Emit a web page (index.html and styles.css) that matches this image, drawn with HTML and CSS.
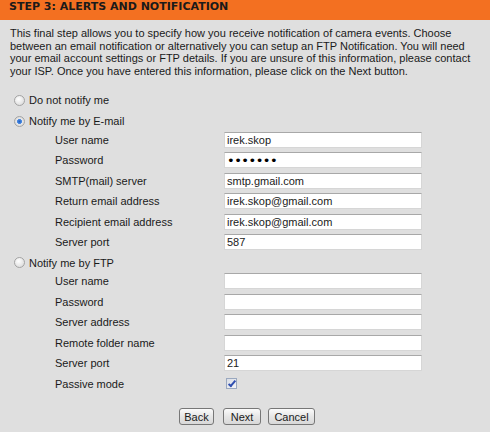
FILE: index.html
```html
<!DOCTYPE html>
<html>
<head>
<link rel="stylesheet" href="styles.css">
</head>
<body>

<div class="step-head">STEP 3: ALERTS AND NOTIFICATION</div>

<p class="intro">This final step allows you to specify how you receive notification of camera events. Choose between an email notification or alternatively you can setup an FTP Notification. You will need your email account settings or FTP details. If you are unsure of this information, please contact your ISP. Once you have entered this information, please click on the Next button.</p>

<form action="javascript:void(0)" class="alerts">
<label class="option first"><input type="radio" name="notify" value="none"> Do not notify me</label>
<label class="option"><input type="radio" name="notify" value="email" checked> Notify me by E-mail</label>
<div class="fields">
	<span>User name</span><input type="text" id="mailUser" value="irek.skop">
	<span>Password</span><input type="password" id="mailPass" value="1234567">
	<span>SMTP(mail) server</span><input type="text" id="smtp" value="smtp.gmail.com">
	<span>Return email address</span><input type="text" id="returnAddr" value="irek.skop@gmail.com">
	<span>Recipient email address</span><input type="text" id="recipient" value="irek.skop@gmail.com">
	<span>Server port</span><input type="text" id="mailPort" value="587">
</div>
<label class="option"><input type="radio" name="notify" value="ftp"> Notify me by FTP</label>
<div class="fields">
	<span>User name</span><input type="text" id="ftpUser">
	<span>Password</span><input type="password" id="ftpPass">
	<span>Server address</span><input type="text" id="ftpHost">
	<span>Remote folder name</span><input type="text" id="ftpFolder">
	<span>Server port</span><input type="text" id="ftpPort" value="21">
	<span>Passive mode</span><div class="check-cell"><input type="checkbox" id="passive" checked></div>
</div>
<div class="buttons">
	<input type="button" class="back" value="Back">
	<input type="submit" class="next" value="Next">
	<input type="button" class="cancel" value="Cancel">
</div>
</form>

</body>
</html>
```

FILE: styles.css
```css
body {
	margin:0;
	width:490px;
	height:432px;
	background-color:#dfdfdf;
	font:11px "Liberation Sans", Arial, sans-serif;
	color:#1a1a1a;
}
.step-head {
	height:20px;
	line-height:21px;
	padding-left:9px;
	background-color:#f37021;
	font:bold 11px "DejaVu Sans", Verdana, sans-serif;
	color:#1a1a1a;
}
p.intro {
	margin:7px 0 0 0;
	padding:0 10px;
	line-height:12.5px;
}
form.alerts {
	margin-top:13px;
}
.option {
	display:flex;
	align-items:center;
	height:20.5px;
	padding-left:14px;
}
.option.first {
	margin-bottom:0.5px;
}
.fields {
	display:grid;
	grid-template-columns:169px 198px;
	grid-auto-rows:20.5px;
	align-items:center;
	margin-top:-2px;
	padding-left:55px;
}
.fields input[type=text], .fields input[type=password] {
	box-sizing:border-box;
	width:198px;
	height:16px;
	margin:0;
	padding:0 2px;
	border:1px solid #d6d6d6;
	border-top-color:#a8a8a8;
	background-color:#fff;
	font:inherit;
	color:#1a1a1a;
}
.fields input[type=password] {
	font:13px "DejaVu Sans", sans-serif;
	letter-spacing:-0.5px;
	color:#000;
}
input[type=radio] {
	appearance:none;
	box-sizing:border-box;
	width:11px;
	height:11px;
	margin:0 4px 0 0;
	border:1px solid #a3a3a3;
	border-radius:50%;
	background:radial-gradient(circle at 40% 35%, #ffffff, #d4d4d4);
}
input[type=radio]:checked {
	background:radial-gradient(circle, #1f5fc4 0, #4b8ae0 2.2px, #e8e8e8 2.8px, #cfcfcf 100%);
}
.check-cell {
	display:flex;
	align-items:center;
	padding-left:2px;
}
input[type=checkbox] {
	appearance:none;
	position:relative;
	box-sizing:border-box;
	width:11px;
	height:11px;
	margin:0;
	border:1px solid #9aa8bf;
	background:linear-gradient(135deg, #d9dde5, #f4f4f6);
}
input[type=checkbox]:checked::after {
	content:"";
	position:absolute;
	left:3px;
	top:0;
	width:2px;
	height:6px;
	border:solid #2f4fb0;
	border-width:0 2px 2px 0;
	transform:rotate(40deg);
}
.buttons {
	display:flex;
	justify-content:center;
	gap:7px;
	margin-top:14px;
	padding-left:4px;
}
.buttons input {
	box-sizing:border-box;
	height:17px;
	margin:0;
	padding:0;
	border:1px solid #777;
	border-radius:3px;
	background:linear-gradient(#fbfbfb, #e6e6e6 50%, #d8d8d8);
	font:inherit;
	color:#1a1a1a;
}
.buttons .back {
	width:35px;
}
.buttons .next {
	width:38px;
	margin-left:2px;
}
.buttons .cancel {
	width:47px;
}
```
